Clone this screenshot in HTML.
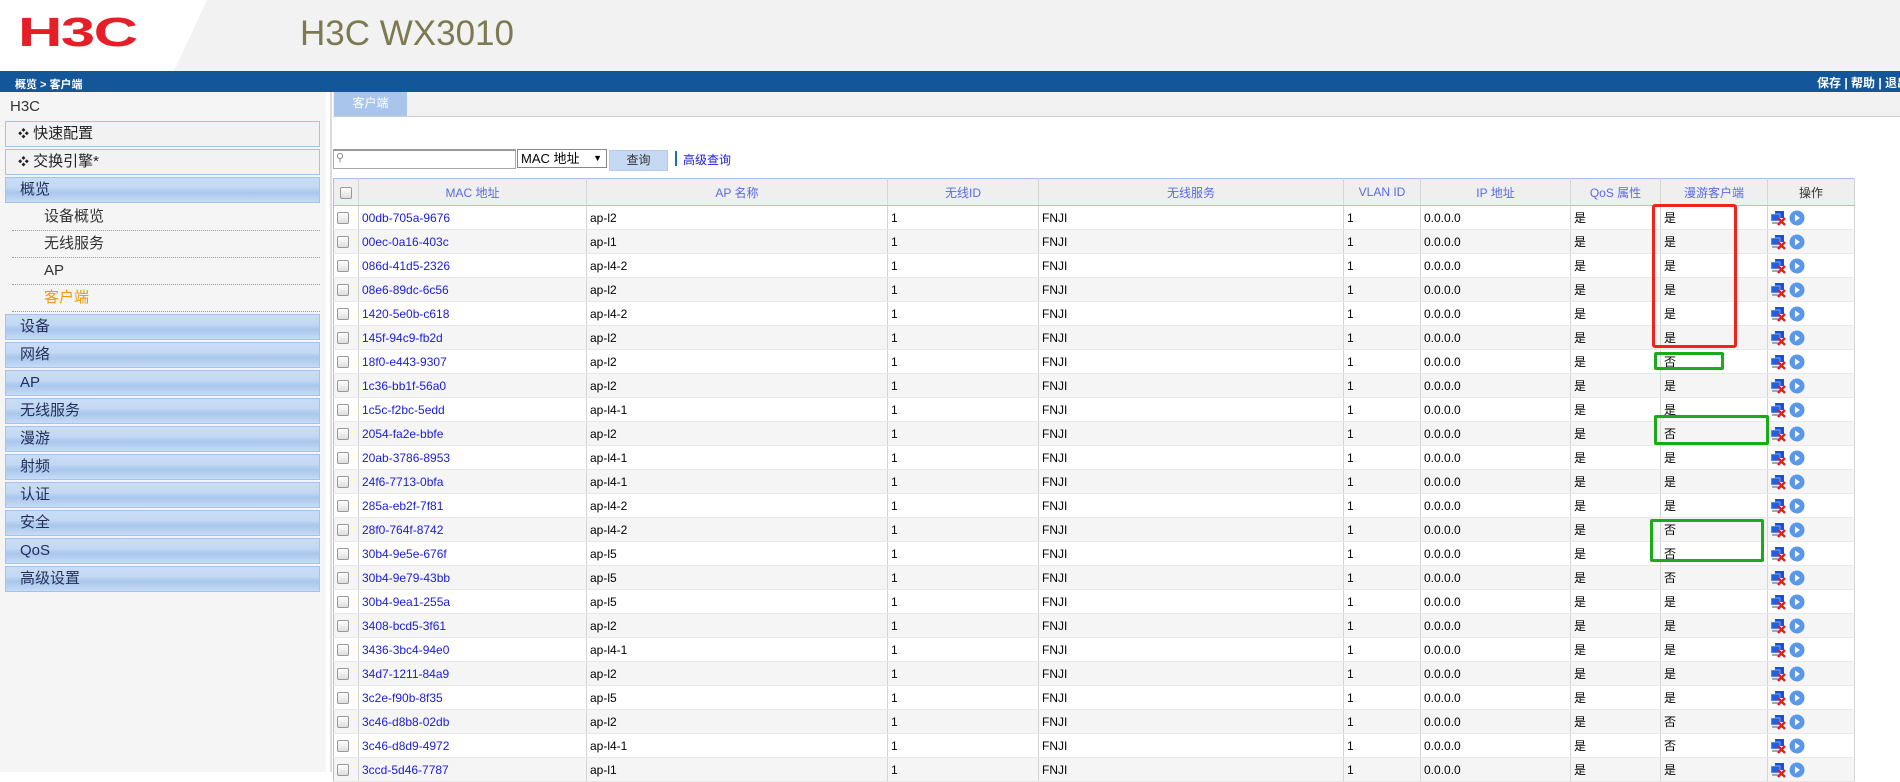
<!DOCTYPE html>
<html><head><meta charset="utf-8">
<style>
*{margin:0;padding:0;box-sizing:border-box}
body{width:1900px;height:772px;overflow:hidden;background:#fff;font-family:"Liberation Sans","Noto Sans CJK SC",sans-serif;position:relative}
.abs{position:absolute}
#hdr{left:0;top:0;width:1900px;height:71px;background:#f2f2f2}
#bar{left:0;top:71px;width:1900px;height:21px;background:#13569a;color:#fff;font-size:12px;font-weight:bold}
#side{left:0;top:92px;width:326px;height:680px;background:#f5f5f5}
.box{position:absolute;left:5px;width:315px;height:26px;border:1px solid #a3c3ea;font-size:15px;color:#222;line-height:24px}
.g{background:linear-gradient(#c9ddf6 0%,#c3d8f4 40%,#a9c6ec 60%,#c7dbf5 100%);color:#1f2f5a;padding-left:14px}
.sub{position:absolute;left:12px;width:308px;height:27px;border-bottom:1px dotted #999;font-size:15px;color:#333;padding-left:32px;line-height:26px}
table{position:absolute;left:333px;top:178px;width:1522px;border-collapse:collapse;font-size:12px;border:1px solid #a3c3ea}
td{height:24px;border-right:1px solid #d5d5d5;border-bottom:1px solid #e8e8e8;padding-left:3px;white-space:nowrap;overflow:hidden}
th{height:27px;background:#efefef;font-weight:normal;color:#5a6be0;border-right:1px solid #d5d5d5;border-bottom:1px solid #a3c3ea;font-size:12px}
tr:nth-child(odd) td{background:#f5f5f5}
.cb{display:inline-block;width:12px;height:12px;border:1px solid #999;border-radius:2px;background:linear-gradient(#fff,#ddd);vertical-align:middle}
.m{color:#1a1adf}
.ic{display:inline-block;vertical-align:middle}
</style></head><body>
<div id="hdr" class="abs">
<svg class="abs" style="left:0;top:0" width="210" height="71"><polygon points="0,0 207,0 174,71 0,71" fill="#fff"/></svg>
<div class="abs" style="left:18px;top:9px;font-size:41px;font-weight:bold;color:#e61e28;letter-spacing:-1px;font-family:'Liberation Sans',sans-serif;transform:scaleX(1.5);transform-origin:left">H3C</div>
<div class="abs" style="left:300px;top:14px;font-size:35px;color:#7d7a52">H3C WX3010</div>
</div>
<div id="bar" class="abs"><span class="abs" style="left:15px;top:5px;font-size:11px">概览 &gt; 客户端</span><span class="abs" style="left:1817px;top:3px;white-space:nowrap">保存 | 帮助 | 退出</span></div>
<div id="side" class="abs">
<div class="abs" style="left:10px;top:6px;font-size:15px;color:#333">H3C</div>
<div class="box" style="top:29px;background:#f2f2f2;padding-left:12px"><span style="font-size:11px;vertical-align:top">❖</span> 快速配置</div>
<div class="box" style="top:57px;background:#f2f2f2;padding-left:12px"><span style="font-size:11px;vertical-align:top">❖</span> 交换引擎*</div>
<div class="box g" style="top:85px">概览</div>
<div class="sub" style="top:112px">设备概览</div>
<div class="sub" style="top:139px">无线服务</div>
<div class="sub" style="top:166px">AP</div>
<div class="sub" style="top:193px;color:#f39800">客户端</div>
<div class="box g" style="top:222px">设备</div>
<div class="box g" style="top:250px">网络</div>
<div class="box g" style="top:278px">AP</div>
<div class="box g" style="top:306px">无线服务</div>
<div class="box g" style="top:334px">漫游</div>
<div class="box g" style="top:362px">射频</div>
<div class="box g" style="top:390px">认证</div>
<div class="box g" style="top:418px">安全</div>
<div class="box g" style="top:446px">QoS</div>
<div class="box g" style="top:474px">高级设置</div>
</div>
<div class="abs" style="left:330px;top:92px;width:2px;height:680px;background:#ddd"></div>
<div class="abs" style="left:333px;top:92px;width:1567px;height:25px;background:#f2f2f2;border-bottom:1px solid #ccc"></div>
<div class="abs" style="left:334px;top:92px;width:73px;height:24px;background:#a9c5ec;color:#fff;font-size:12px;text-align:center;line-height:22px">客户端</div>
<div class="abs" style="left:333px;top:149px;width:183px;height:20px;border:1px solid #aaa;border-top:2px solid #999;background:#fff"><span style="position:absolute;left:2px;top:0;font-size:11px;color:#888">⚲</span></div>
<div class="abs" style="left:517px;top:149px;width:90px;height:19px;border:1px solid #888;background:#fff;font-size:13px;line-height:17px;padding-left:3px">MAC 地址<span style="position:absolute;right:4px;font-size:9px">▼</span></div>
<div class="abs" style="left:609px;top:150px;width:59px;height:21px;background:#c6d9f3;border:1px solid #b4cbee;font-size:12px;text-align:center;line-height:19px;color:#333">查询</div>
<div class="abs" style="left:675px;top:151px;width:2px;height:15px;background:#1a70c0"></div>
<div class="abs" style="left:683px;top:151px;font-size:12px;color:#1a1adf">高级查询</div>
<svg width="0" height="0" style="position:absolute"><defs>
<symbol id="op" viewBox="0 0 36 16"><rect x="4" y="1" width="9" height="7" fill="#1a4fd0"/><rect x="0" y="4" width="9" height="7" fill="#2060e0" stroke="#cde" stroke-width=".6"/><rect x="1" y="12" width="7" height="2" fill="#9ab"/><path d="M7 8l7 7M14 8l-7 7" stroke="#e02020" stroke-width="2.4"/><circle cx="26" cy="8" r="7.5" fill="#5b97e8"/><path d="M24 4.5v7l5-3.5z" fill="#fff"/></symbol></defs></svg>
<table>
<tr><th style="width:25px"><span class="cb"></span></th><th style="width:228px">MAC 地址</th><th style="width:301px">AP 名称</th><th style="width:151px">无线ID</th><th style="width:305px">无线服务</th><th style="width:77px">VLAN ID</th><th style="width:150px">IP 地址</th><th style="width:90px">QoS 属性</th><th style="width:107px">漫游客户端</th><th style="color:#333">操作</th></tr>
<tr><td><span class="cb"></span></td><td class="m">00db-705a-9676</td><td>ap-l2</td><td>1</td><td>FNJI</td><td>1</td><td>0.0.0.0</td><td>是</td><td>是</td><td><svg class="ic" width="36" height="16"><use href="#op"/></svg></td></tr>
<tr><td><span class="cb"></span></td><td class="m">00ec-0a16-403c</td><td>ap-l1</td><td>1</td><td>FNJI</td><td>1</td><td>0.0.0.0</td><td>是</td><td>是</td><td><svg class="ic" width="36" height="16"><use href="#op"/></svg></td></tr>
<tr><td><span class="cb"></span></td><td class="m">086d-41d5-2326</td><td>ap-l4-2</td><td>1</td><td>FNJI</td><td>1</td><td>0.0.0.0</td><td>是</td><td>是</td><td><svg class="ic" width="36" height="16"><use href="#op"/></svg></td></tr>
<tr><td><span class="cb"></span></td><td class="m">08e6-89dc-6c56</td><td>ap-l2</td><td>1</td><td>FNJI</td><td>1</td><td>0.0.0.0</td><td>是</td><td>是</td><td><svg class="ic" width="36" height="16"><use href="#op"/></svg></td></tr>
<tr><td><span class="cb"></span></td><td class="m">1420-5e0b-c618</td><td>ap-l4-2</td><td>1</td><td>FNJI</td><td>1</td><td>0.0.0.0</td><td>是</td><td>是</td><td><svg class="ic" width="36" height="16"><use href="#op"/></svg></td></tr>
<tr><td><span class="cb"></span></td><td class="m">145f-94c9-fb2d</td><td>ap-l2</td><td>1</td><td>FNJI</td><td>1</td><td>0.0.0.0</td><td>是</td><td>是</td><td><svg class="ic" width="36" height="16"><use href="#op"/></svg></td></tr>
<tr><td><span class="cb"></span></td><td class="m">18f0-e443-9307</td><td>ap-l2</td><td>1</td><td>FNJI</td><td>1</td><td>0.0.0.0</td><td>是</td><td>否</td><td><svg class="ic" width="36" height="16"><use href="#op"/></svg></td></tr>
<tr><td><span class="cb"></span></td><td class="m">1c36-bb1f-56a0</td><td>ap-l2</td><td>1</td><td>FNJI</td><td>1</td><td>0.0.0.0</td><td>是</td><td>是</td><td><svg class="ic" width="36" height="16"><use href="#op"/></svg></td></tr>
<tr><td><span class="cb"></span></td><td class="m">1c5c-f2bc-5edd</td><td>ap-l4-1</td><td>1</td><td>FNJI</td><td>1</td><td>0.0.0.0</td><td>是</td><td>是</td><td><svg class="ic" width="36" height="16"><use href="#op"/></svg></td></tr>
<tr><td><span class="cb"></span></td><td class="m">2054-fa2e-bbfe</td><td>ap-l2</td><td>1</td><td>FNJI</td><td>1</td><td>0.0.0.0</td><td>是</td><td>否</td><td><svg class="ic" width="36" height="16"><use href="#op"/></svg></td></tr>
<tr><td><span class="cb"></span></td><td class="m">20ab-3786-8953</td><td>ap-l4-1</td><td>1</td><td>FNJI</td><td>1</td><td>0.0.0.0</td><td>是</td><td>是</td><td><svg class="ic" width="36" height="16"><use href="#op"/></svg></td></tr>
<tr><td><span class="cb"></span></td><td class="m">24f6-7713-0bfa</td><td>ap-l4-1</td><td>1</td><td>FNJI</td><td>1</td><td>0.0.0.0</td><td>是</td><td>是</td><td><svg class="ic" width="36" height="16"><use href="#op"/></svg></td></tr>
<tr><td><span class="cb"></span></td><td class="m">285a-eb2f-7f81</td><td>ap-l4-2</td><td>1</td><td>FNJI</td><td>1</td><td>0.0.0.0</td><td>是</td><td>是</td><td><svg class="ic" width="36" height="16"><use href="#op"/></svg></td></tr>
<tr><td><span class="cb"></span></td><td class="m">28f0-764f-8742</td><td>ap-l4-2</td><td>1</td><td>FNJI</td><td>1</td><td>0.0.0.0</td><td>是</td><td>否</td><td><svg class="ic" width="36" height="16"><use href="#op"/></svg></td></tr>
<tr><td><span class="cb"></span></td><td class="m">30b4-9e5e-676f</td><td>ap-l5</td><td>1</td><td>FNJI</td><td>1</td><td>0.0.0.0</td><td>是</td><td>否</td><td><svg class="ic" width="36" height="16"><use href="#op"/></svg></td></tr>
<tr><td><span class="cb"></span></td><td class="m">30b4-9e79-43bb</td><td>ap-l5</td><td>1</td><td>FNJI</td><td>1</td><td>0.0.0.0</td><td>是</td><td>否</td><td><svg class="ic" width="36" height="16"><use href="#op"/></svg></td></tr>
<tr><td><span class="cb"></span></td><td class="m">30b4-9ea1-255a</td><td>ap-l5</td><td>1</td><td>FNJI</td><td>1</td><td>0.0.0.0</td><td>是</td><td>是</td><td><svg class="ic" width="36" height="16"><use href="#op"/></svg></td></tr>
<tr><td><span class="cb"></span></td><td class="m">3408-bcd5-3f61</td><td>ap-l2</td><td>1</td><td>FNJI</td><td>1</td><td>0.0.0.0</td><td>是</td><td>是</td><td><svg class="ic" width="36" height="16"><use href="#op"/></svg></td></tr>
<tr><td><span class="cb"></span></td><td class="m">3436-3bc4-94e0</td><td>ap-l4-1</td><td>1</td><td>FNJI</td><td>1</td><td>0.0.0.0</td><td>是</td><td>是</td><td><svg class="ic" width="36" height="16"><use href="#op"/></svg></td></tr>
<tr><td><span class="cb"></span></td><td class="m">34d7-1211-84a9</td><td>ap-l2</td><td>1</td><td>FNJI</td><td>1</td><td>0.0.0.0</td><td>是</td><td>是</td><td><svg class="ic" width="36" height="16"><use href="#op"/></svg></td></tr>
<tr><td><span class="cb"></span></td><td class="m">3c2e-f90b-8f35</td><td>ap-l5</td><td>1</td><td>FNJI</td><td>1</td><td>0.0.0.0</td><td>是</td><td>是</td><td><svg class="ic" width="36" height="16"><use href="#op"/></svg></td></tr>
<tr><td><span class="cb"></span></td><td class="m">3c46-d8b8-02db</td><td>ap-l2</td><td>1</td><td>FNJI</td><td>1</td><td>0.0.0.0</td><td>是</td><td>否</td><td><svg class="ic" width="36" height="16"><use href="#op"/></svg></td></tr>
<tr><td><span class="cb"></span></td><td class="m">3c46-d8d9-4972</td><td>ap-l4-1</td><td>1</td><td>FNJI</td><td>1</td><td>0.0.0.0</td><td>是</td><td>否</td><td><svg class="ic" width="36" height="16"><use href="#op"/></svg></td></tr>
<tr><td><span class="cb"></span></td><td class="m">3ccd-5d46-7787</td><td>ap-l1</td><td>1</td><td>FNJI</td><td>1</td><td>0.0.0.0</td><td>是</td><td>是</td><td><svg class="ic" width="36" height="16"><use href="#op"/></svg></td></tr>
</table>
<div class="abs" style="left:1652px;top:204px;width:85px;height:144px;border:3px solid #f0241c;border-radius:3px"></div>
<div class="abs" style="left:1654px;top:352px;width:70px;height:18px;border:3px solid #1aaa1a;border-radius:2px"></div>
<div class="abs" style="left:1654px;top:415px;width:115px;height:30px;border:3px solid #1aaa1a;border-radius:2px"></div>
<div class="abs" style="left:1650px;top:519px;width:114px;height:43px;border:3px solid #1aaa1a;border-radius:2px"></div>
</body></html>
